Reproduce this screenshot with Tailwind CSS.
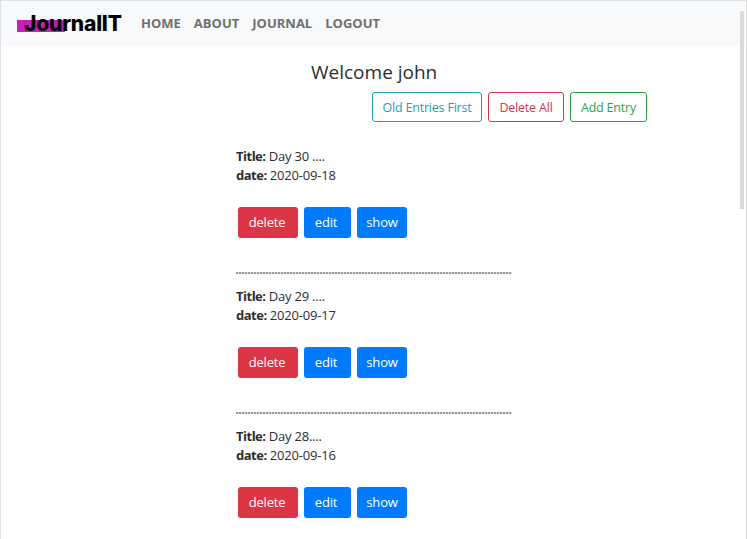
<!DOCTYPE html>
<html lang="en">
<head>
    <meta charset="UTF-8">
    <title>JournalIT</title>
    <script src="https://cdn.jsdelivr.net/npm/@tailwindcss/browser@4"></script>
</head>
<body class="h-[539px] overflow-hidden bg-white font-['Open_Sans','Noto_Sans',sans-serif] text-[13px] tracking-[-0.2px] text-[#2b2f33]">
    <div class="relative h-[539px] w-[747px] overflow-hidden border-t border-r border-l border-[#dee2e6]">
        <nav class="flex h-[45px] items-center bg-[#f8f9fa] pl-[16px]">
            <div class="relative mr-[20px] h-[28px] w-[104px]">
                <div class="absolute left-0 top-[10px] h-[12px] w-[48px] bg-[#c71fbe]"></div>
                <span class="absolute left-[7px] top-[1px] font-['Inter',sans-serif] text-[21px] leading-[26px] font-extrabold tracking-[-0.2px] text-black">JournalIT</span>
            </div>
            <div class="flex gap-[13px] text-[13px] font-bold tracking-normal text-[#707070]">
                <a href="#">HOME</a>
                <a href="#">ABOUT</a>
                <a href="#">JOURNAL</a>
                <a href="#">LOGOUT</a>
            </div>
        </nav>

        <h1 class="mt-[13px] ml-[310px] text-[19px] leading-[26px] font-medium tracking-normal text-[#2b2f33]">Welcome john</h1>
        <div class="mt-[7px] ml-[371px] flex gap-[6px] text-[12.5px]">
            <button class="h-[30px] w-[110px] rounded-[3px] border border-[#17a2b8] pt-[2px] text-[#17a2b8]">Old Entries First</button>
            <button class="h-[30px] w-[76px] rounded-[3px] border border-[#dc3545] pt-[2px] text-[#dc3545]">Delete All</button>
            <button class="h-[30px] w-[77px] rounded-[3px] border border-[#28a745] pt-[2px] text-[#28a745]">Add Entry</button>
        </div>

        <div class="mt-[12px] ml-[235px] w-[276px]">
            <div class="h-[140px] pt-[13px]">
                <p class="h-[19px] leading-[19px]"><b class="tracking-[-0.5px]">Title:</b> Day 30 ....</p>
                <p class="h-[19px] leading-[19px]"><b class="tracking-[-0.5px]">date:</b> 2020-09-18</p>
                <div class="mt-[22px] ml-[2px] flex gap-[6px] text-white">
                    <button class="h-[31px] w-[60px] rounded-[3px] bg-[#dc3545] pr-[2px]">delete</button>
                    <button class="h-[31px] w-[47px] rounded-[3px] bg-[#007bff] pr-[3px]">edit</button>
                    <button class="h-[31px] w-[50px] rounded-[3px] bg-[#007bff]">show</button>
                </div>
                <div class="mt-[34px] h-[2px] bg-[repeating-linear-gradient(90deg,#999_0,#999_2px,#e0e0e0_2px,#e0e0e0_3px)]"></div>
            </div>
            <div class="h-[140px] pt-[13px]">
                <p class="h-[19px] leading-[19px]"><b class="tracking-[-0.5px]">Title:</b> Day 29 ....</p>
                <p class="h-[19px] leading-[19px]"><b class="tracking-[-0.5px]">date:</b> 2020-09-17</p>
                <div class="mt-[22px] ml-[2px] flex gap-[6px] text-white">
                    <button class="h-[31px] w-[60px] rounded-[3px] bg-[#dc3545] pr-[2px]">delete</button>
                    <button class="h-[31px] w-[47px] rounded-[3px] bg-[#007bff] pr-[3px]">edit</button>
                    <button class="h-[31px] w-[50px] rounded-[3px] bg-[#007bff]">show</button>
                </div>
                <div class="mt-[34px] h-[2px] bg-[repeating-linear-gradient(90deg,#999_0,#999_2px,#e0e0e0_2px,#e0e0e0_3px)]"></div>
            </div>
            <div class="pt-[13px]">
                <p class="h-[19px] leading-[19px]"><b class="tracking-[-0.5px]">Title:</b> Day 28....</p>
                <p class="h-[19px] leading-[19px]"><b class="tracking-[-0.5px]">date:</b> 2020-09-16</p>
                <div class="mt-[22px] ml-[2px] flex gap-[6px] text-white">
                    <button class="h-[31px] w-[60px] rounded-[3px] bg-[#dc3545] pr-[2px]">delete</button>
                    <button class="h-[31px] w-[47px] rounded-[3px] bg-[#007bff] pr-[3px]">edit</button>
                    <button class="h-[31px] w-[50px] rounded-[3px] bg-[#007bff]">show</button>
                </div>
            </div>
        </div>

        <div class="absolute top-[10px] right-[2px] h-[198px] w-[4px] bg-[#d9dbd9]"></div>
    </div>
</body>
</html>
